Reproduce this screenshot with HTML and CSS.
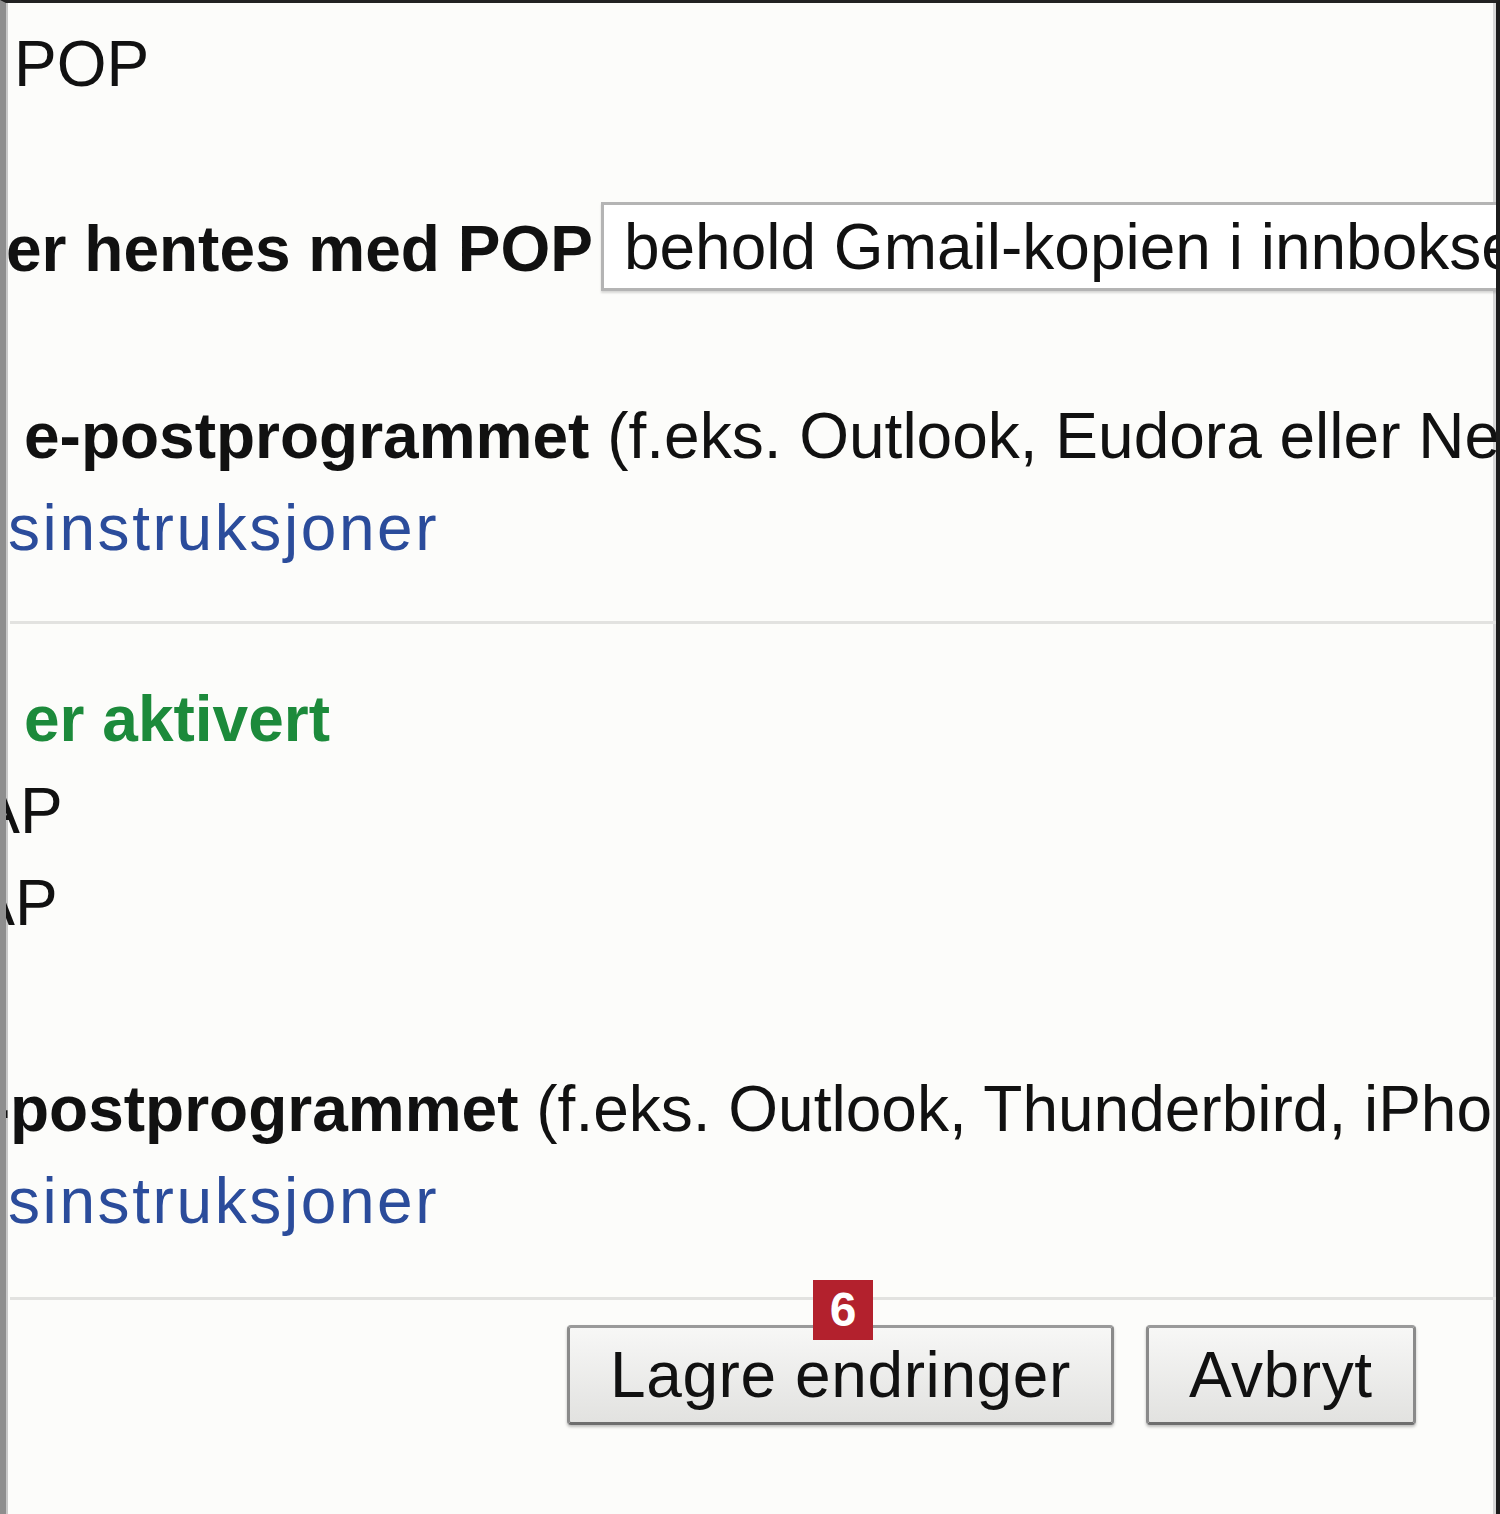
FILE: index.html
```html
<!DOCTYPE html>
<html lang="no">
<head>
    <meta charset="UTF-8">
    <title>Innstillinger - Videresending og POP/IMAP</title>
    <link rel="stylesheet" href="styles.css">
</head>
<body>
    <div class="frame">
        <div class="settings">
            <!-- POP -->
            <div class="line first"><span class="cut" style="width: 8px">Deaktiver&nbsp;</span><span>POP</span></div>
            <div class="line pop-row">
                <span class="cut bold" style="width: 0">2. Når melding</span><b>er hentes med POP</b>
                <div class="select">behold Gmail-kopien i innboksen</div>
            </div>
            <div class="line conf-row">
                <span class="cut bold" style="width: 18px">3. Konfigurer&nbsp;</span><b>e-postprogrammet</b>&nbsp;(f.eks. Outlook, Eudora eller Netscape Mail)
            </div>
            <div class="line"><span class="cut link" style="width: 2px">Konfigurering</span><a href="#" class="link">sinstruksjoner</a></div>

            <div class="rule"></div>

            <!-- IMAP -->
            <div class="line status"><span class="cut on" style="width: 18px">Status: IMAP&nbsp;</span><b class="on">er aktivert</b></div>
            <div class="line"><span class="cut" style="width: 14px">Aktiver IMA</span><span>P</span></div>
            <div class="line"><span class="cut" style="width: 9px">Deaktiver IMA</span><span>P</span></div>
            <div class="line conf-row2">
                <span class="cut bold" style="width: 4px">Konfigurer e-</span><b>postprogrammet</b>&nbsp;(f.eks. Outlook, Thunderbird, iPhone)
            </div>
            <div class="line"><span class="cut link" style="width: 2px">Konfigurering</span><a href="#" class="link">sinstruksjoner</a></div>

            <div class="rule second"></div>

            <div class="actions">
                <button class="btn save">Lagre endringer<span class="badge">6</span></button>
                <button class="btn">Avbryt</button>
            </div>
        </div>
    </div>
</body>
</html>
```

FILE: styles.css
```css
body {
    margin: 0;
    background: #fcfcfa;
    font-family: "Liberation Sans", Arial, sans-serif;
    color: #111;
}
.frame {
    height: 1514px;
    box-sizing: border-box;
    border-top: 3px solid #222;
    border-left: 6px solid #8e8e8e;
    border-right: 4px solid #1c1c1c;
    box-shadow: inset 2px 0 0 #c8c8c8, inset -3px 0 0 #d6d6d6;
    overflow: hidden;
    background: #fcfcfa;
}
.settings {
    font-size: 64px;
    line-height: 92px;
}
.line {
    display: flex;
    align-items: center;
    height: 92px;
    white-space: nowrap;
}
/* part of the text that runs off the left edge */
.cut {
    flex: 0 0 auto;
    display: flex;
    justify-content: flex-end;
    white-space: nowrap;
}
.bold, b {
    font-weight: bold;
}
.first {
    margin-top: 15px;
}
.pop-row {
    margin-top: 93px;
}
.select {
    align-self: flex-start;
    margin-top: -1px;
    margin-left: 8px;
    height: 89px;
    box-sizing: border-box;
    padding: 0 20px;
    line-height: 84px;
    background: #fff;
    border: 3px solid #b4b4b4;
    box-shadow: 0 2px 2px rgba(0, 0, 0, 0.15);
    font-weight: normal;
}
.conf-row {
    margin-top: 95px;
}
.link {
    color: #2b4c9b;
    text-decoration: none;
    letter-spacing: 2.6px;
}
.rule {
    height: 3px;
    margin: 47px 0 49px 4px;
    background: #e2e2e0;
}
.rule.second {
    margin: 50px 0 25px 4px;
}
.on {
    color: #1c8a3b;
    font-weight: bold;
}
.conf-row2 {
    margin-top: 114px;
}
.actions {
    display: flex;
    gap: 32px;
    padding-left: 561px;
}
.btn {
    position: relative;
    height: 100px;
    padding: 0 40px;
    font-family: inherit;
    font-size: 64px;
    letter-spacing: 0.6px;
    color: #111;
    background: linear-gradient(#f7f7f6, #e2e2e0);
    border: 3px solid #8a8a8a;
    border-color: #9a9a9a #8a8a8a #6e6e6e #8a8a8a;
    border-radius: 4px;
    box-shadow: 0 2px 3px rgba(0, 0, 0, 0.25);
}
.badge {
    position: absolute;
    left: 243px;
    top: -48px;
    width: 60px;
    height: 60px;
    line-height: 60px;
    background: #b3212d;
    color: #fff;
    font-size: 48px;
    font-weight: bold;
    letter-spacing: 0;
    text-align: center;
}
```
